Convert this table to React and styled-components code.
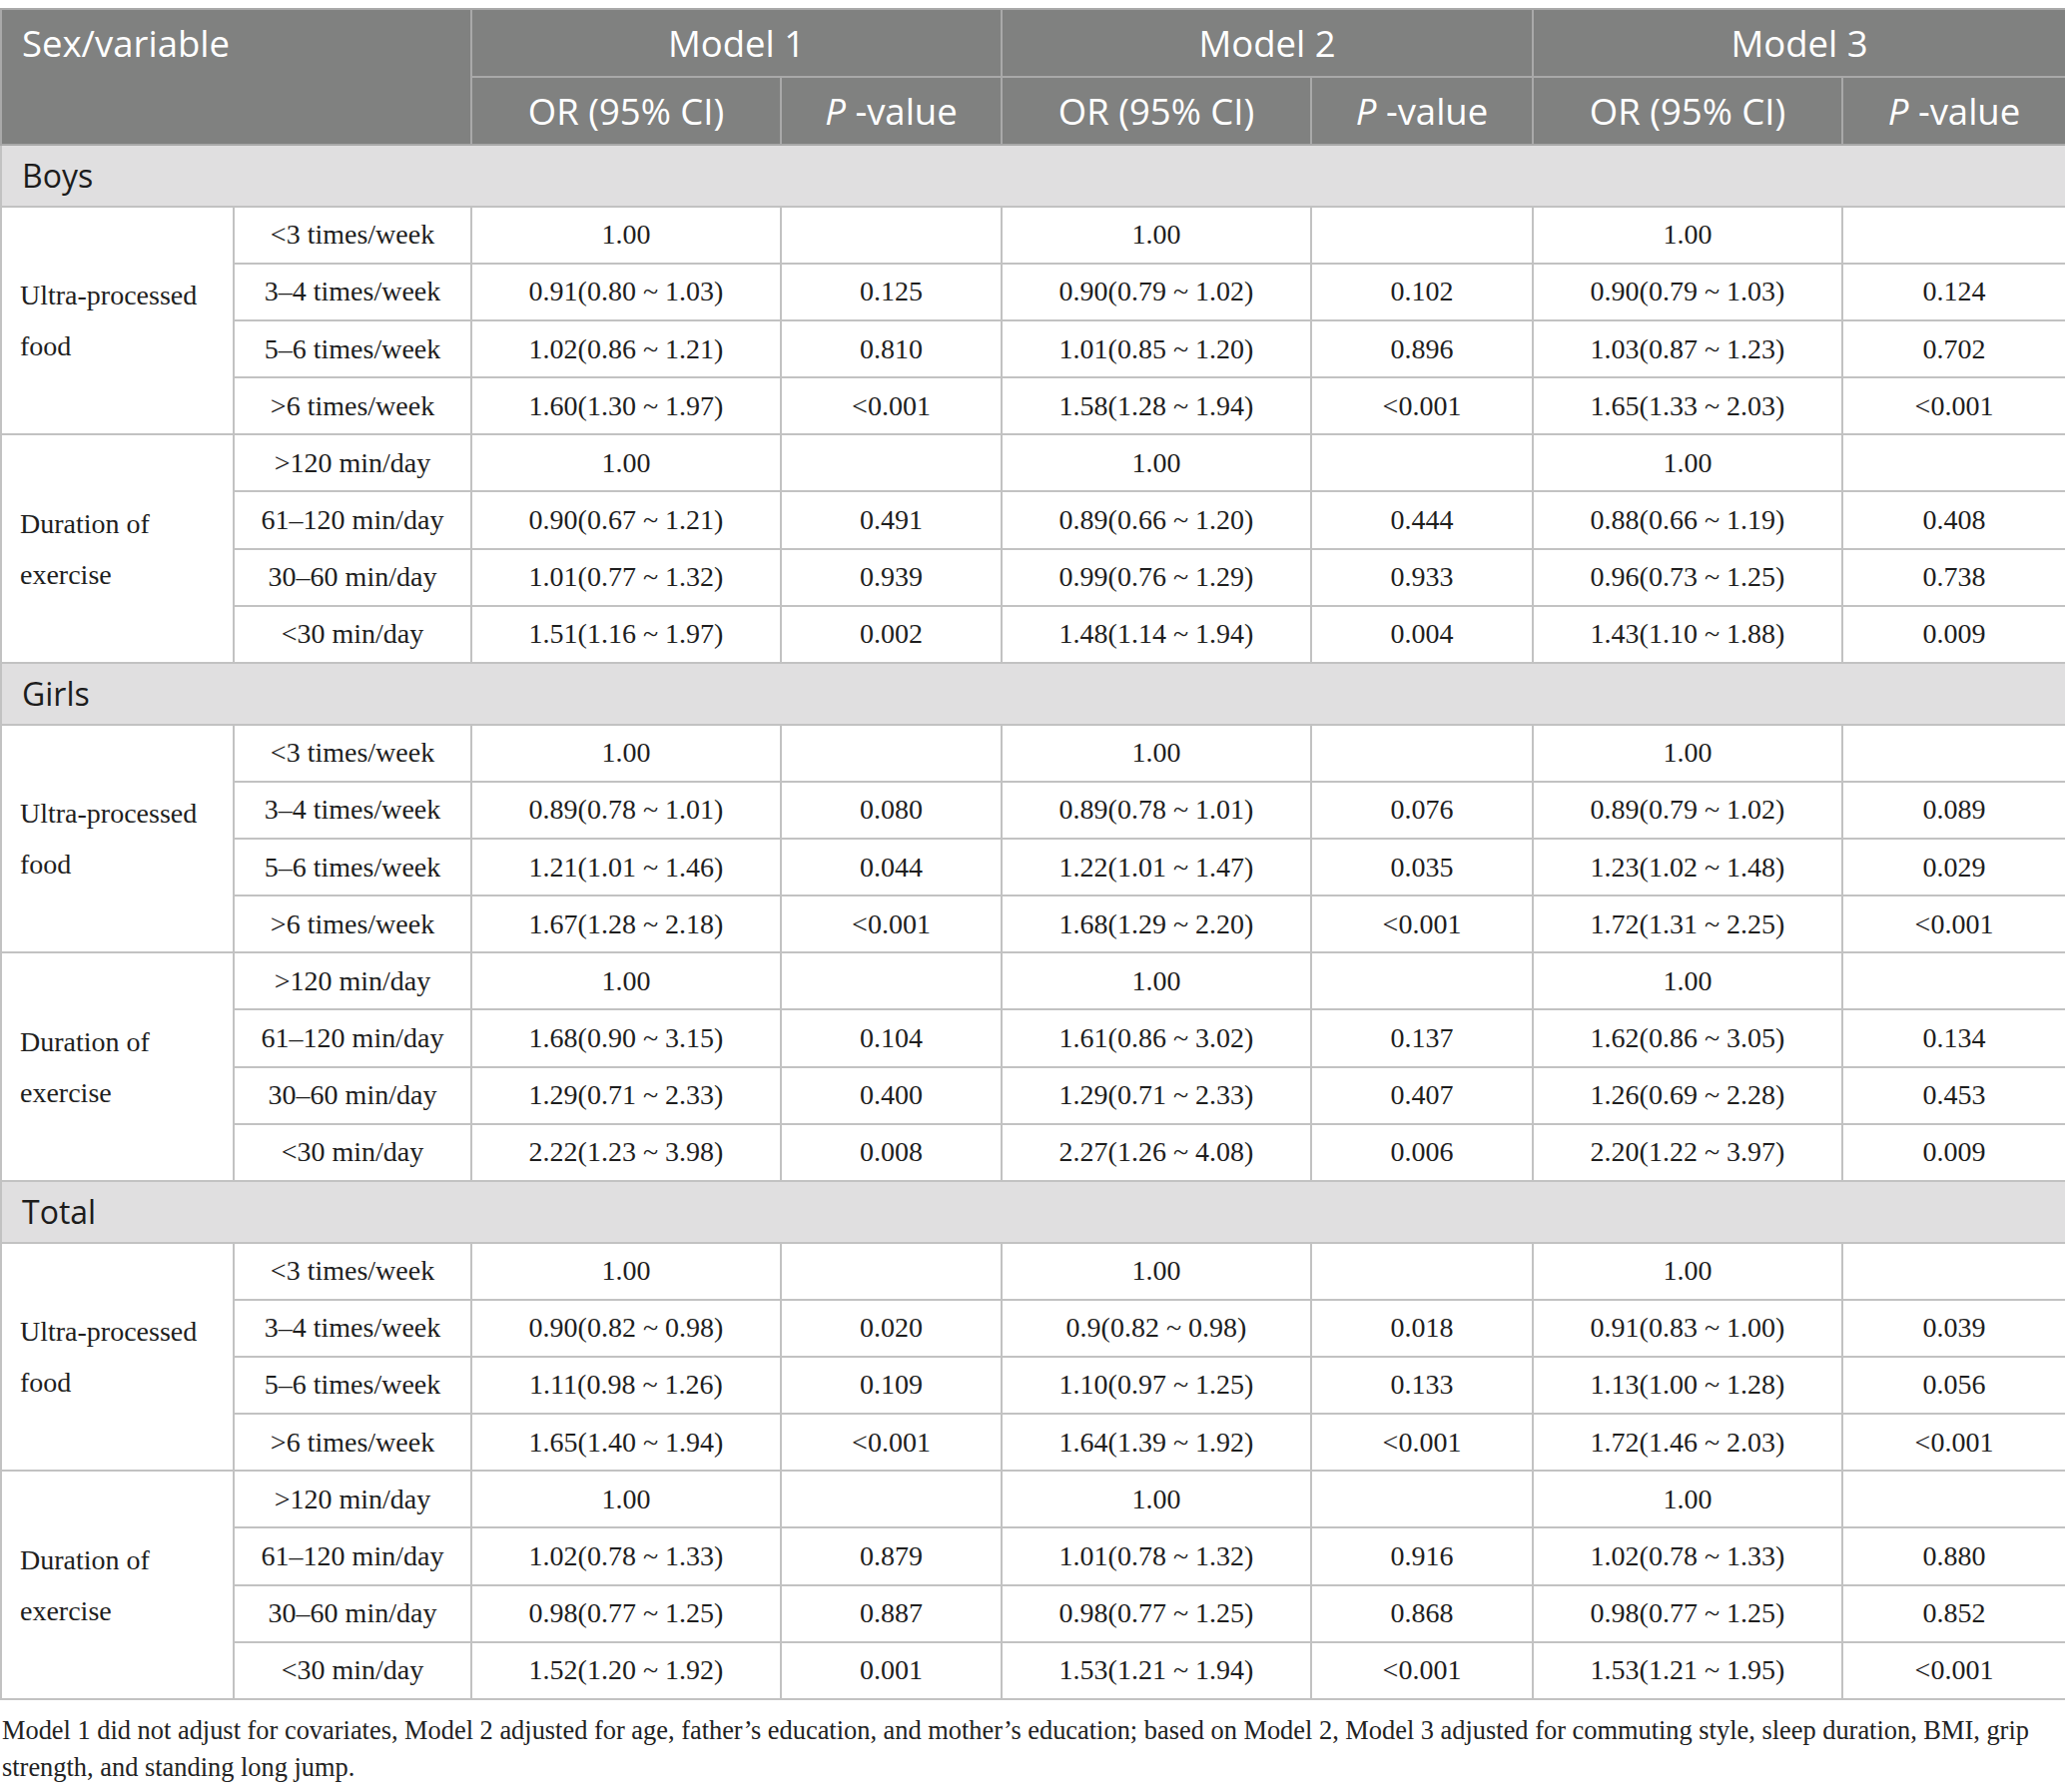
import React from "react";
import styled, { createGlobalStyle } from "styled-components";

const Global = createGlobalStyle`
  html, body { margin: 0; padding: 0; background: #fff; }
  body { font-family: "Liberation Serif", "Times New Roman", serif; color: #222; }
`;

const Page = styled.div`
  padding-top: 8px;
  width: 2068px;
`;

const Table = styled.table`
  width: 2068px;
  table-layout: fixed;
  border-collapse: collapse;
  border: 2px solid #c2c2c2;
`;

const HeadRow = styled.tr`
  height: 68px;
  background: #808180;
`;

const HeadCell = styled.th`
  font-family: "Open Sans", "Noto Sans", sans-serif;
  font-weight: 400;
  font-size: 36.5px;
  color: #fff;
  text-align: ${(p) => (p.$left ? "left" : "center")};
  vertical-align: ${(p) => (p.$top ? "top" : "middle")};
  padding: ${(p) => (p.$left ? "11px 20px" : "0 8px")};
  border: 2px solid #a9a9a9;
  line-height: 44px;
  white-space: nowrap;
`;

const Ital = styled.i`
  font-style: italic;
`;

const SectionRow = styled.tr`
  height: 61.7px;
  background: #e0dfe0;
`;

const SectionCell = styled.td`
  font-family: "Open Sans", "Noto Sans", sans-serif;
  font-size: 32px;
  color: #1c1c1c;
  padding: 0 20px;
  border: 2px solid #c2c2c2;
`;

const DataRow = styled.tr`
  height: 57.17px;
`;

const Cell = styled.td`
  font-size: 28px;
  text-align: ${(p) => (p.$left ? "left" : "center")};
  vertical-align: middle;
  padding: ${(p) => (p.$left ? "0 10px 0 18px" : "0 6px")};
  line-height: ${(p) => (p.$left ? "51px" : "30px")};
  border: 2px solid #c2c2c2;
  color: #1e1e1e;
  white-space: ${(p) => (p.$left ? "normal" : "nowrap")};
`;

const Note = styled.p`
  margin: 12px 0 0;
  padding: 0 2px;
  font-size: 26.4px;
  line-height: 37px;
  color: #222;
`;

const sections = [
  {
    name: "Boys",
    groups: [
      {
        label: "Ultra-processed food",
        rows: [
          ["<3 times/week", "1.00", "", "1.00", "", "1.00", ""],
          ["3–4 times/week", "0.91(0.80 ~ 1.03)", "0.125", "0.90(0.79 ~ 1.02)", "0.102", "0.90(0.79 ~ 1.03)", "0.124"],
          ["5–6 times/week", "1.02(0.86 ~ 1.21)", "0.810", "1.01(0.85 ~ 1.20)", "0.896", "1.03(0.87 ~ 1.23)", "0.702"],
          [">6 times/week", "1.60(1.30 ~ 1.97)", "<0.001", "1.58(1.28 ~ 1.94)", "<0.001", "1.65(1.33 ~ 2.03)", "<0.001"],
        ],
      },
      {
        label: "Duration of exercise",
        rows: [
          [">120 min/day", "1.00", "", "1.00", "", "1.00", ""],
          ["61–120 min/day", "0.90(0.67 ~ 1.21)", "0.491", "0.89(0.66 ~ 1.20)", "0.444", "0.88(0.66 ~ 1.19)", "0.408"],
          ["30–60 min/day", "1.01(0.77 ~ 1.32)", "0.939", "0.99(0.76 ~ 1.29)", "0.933", "0.96(0.73 ~ 1.25)", "0.738"],
          ["<30 min/day", "1.51(1.16 ~ 1.97)", "0.002", "1.48(1.14 ~ 1.94)", "0.004", "1.43(1.10 ~ 1.88)", "0.009"],
        ],
      },
    ],
  },
  {
    name: "Girls",
    groups: [
      {
        label: "Ultra-processed food",
        rows: [
          ["<3 times/week", "1.00", "", "1.00", "", "1.00", ""],
          ["3–4 times/week", "0.89(0.78 ~ 1.01)", "0.080", "0.89(0.78 ~ 1.01)", "0.076", "0.89(0.79 ~ 1.02)", "0.089"],
          ["5–6 times/week", "1.21(1.01 ~ 1.46)", "0.044", "1.22(1.01 ~ 1.47)", "0.035", "1.23(1.02 ~ 1.48)", "0.029"],
          [">6 times/week", "1.67(1.28 ~ 2.18)", "<0.001", "1.68(1.29 ~ 2.20)", "<0.001", "1.72(1.31 ~ 2.25)", "<0.001"],
        ],
      },
      {
        label: "Duration of exercise",
        rows: [
          [">120 min/day", "1.00", "", "1.00", "", "1.00", ""],
          ["61–120 min/day", "1.68(0.90 ~ 3.15)", "0.104", "1.61(0.86 ~ 3.02)", "0.137", "1.62(0.86 ~ 3.05)", "0.134"],
          ["30–60 min/day", "1.29(0.71 ~ 2.33)", "0.400", "1.29(0.71 ~ 2.33)", "0.407", "1.26(0.69 ~ 2.28)", "0.453"],
          ["<30 min/day", "2.22(1.23 ~ 3.98)", "0.008", "2.27(1.26 ~ 4.08)", "0.006", "2.20(1.22 ~ 3.97)", "0.009"],
        ],
      },
    ],
  },
  {
    name: "Total",
    groups: [
      {
        label: "Ultra-processed food",
        rows: [
          ["<3 times/week", "1.00", "", "1.00", "", "1.00", ""],
          ["3–4 times/week", "0.90(0.82 ~ 0.98)", "0.020", "0.9(0.82 ~ 0.98)", "0.018", "0.91(0.83 ~ 1.00)", "0.039"],
          ["5–6 times/week", "1.11(0.98 ~ 1.26)", "0.109", "1.10(0.97 ~ 1.25)", "0.133", "1.13(1.00 ~ 1.28)", "0.056"],
          [">6 times/week", "1.65(1.40 ~ 1.94)", "<0.001", "1.64(1.39 ~ 1.92)", "<0.001", "1.72(1.46 ~ 2.03)", "<0.001"],
        ],
      },
      {
        label: "Duration of exercise",
        rows: [
          [">120 min/day", "1.00", "", "1.00", "", "1.00", ""],
          ["61–120 min/day", "1.02(0.78 ~ 1.33)", "0.879", "1.01(0.78 ~ 1.32)", "0.916", "1.02(0.78 ~ 1.33)", "0.880"],
          ["30–60 min/day", "0.98(0.77 ~ 1.25)", "0.887", "0.98(0.77 ~ 1.25)", "0.868", "0.98(0.77 ~ 1.25)", "0.852"],
          ["<30 min/day", "1.52(1.20 ~ 1.92)", "0.001", "1.53(1.21 ~ 1.94)", "<0.001", "1.53(1.21 ~ 1.95)", "<0.001"],
        ],
      },
    ],
  },
];

const widths = [233, 238, 310, 221, 310, 222, 310, 224];

export default function App() {
  return (
    <Page>
      <Global />
      <Table>
        <colgroup>
          {widths.map((w, i) => (
            <col key={i} style={{ width: w }} />
          ))}
        </colgroup>
        <thead>
          <HeadRow>
            <HeadCell $left $top colSpan={2} rowSpan={2}>
              Sex/variable
            </HeadCell>
            <HeadCell colSpan={2}>Model 1</HeadCell>
            <HeadCell colSpan={2}>Model 2</HeadCell>
            <HeadCell colSpan={2}>Model 3</HeadCell>
          </HeadRow>
          <HeadRow>
            {[1, 2, 3].map((m) => (
              <React.Fragment key={m}>
                <HeadCell>OR (95% CI)</HeadCell>
                <HeadCell>
                  <Ital>P</Ital> -value
                </HeadCell>
              </React.Fragment>
            ))}
          </HeadRow>
        </thead>
        <tbody>
          {sections.map((s) => (
            <React.Fragment key={s.name}>
              <SectionRow>
                <SectionCell colSpan={8}>{s.name}</SectionCell>
              </SectionRow>
              {s.groups.map((g) =>
                g.rows.map((r, ri) => (
                  <DataRow key={g.label + ri}>
                    {ri === 0 && (
                      <Cell $left rowSpan={4}>
                        {g.label}
                      </Cell>
                    )}
                    {r.map((v, vi) => (
                      <Cell key={vi}>{v}</Cell>
                    ))}
                  </DataRow>
                ))
              )}
            </React.Fragment>
          ))}
        </tbody>
      </Table>
      <Note>
        Model 1 did not adjust for covariates, Model 2 adjusted for age, father’s education, and mother’s education; based on
        Model 2, Model 3 adjusted for commuting style, sleep duration, BMI, grip strength, and standing long jump.
      </Note>
    </Page>
  );
}
